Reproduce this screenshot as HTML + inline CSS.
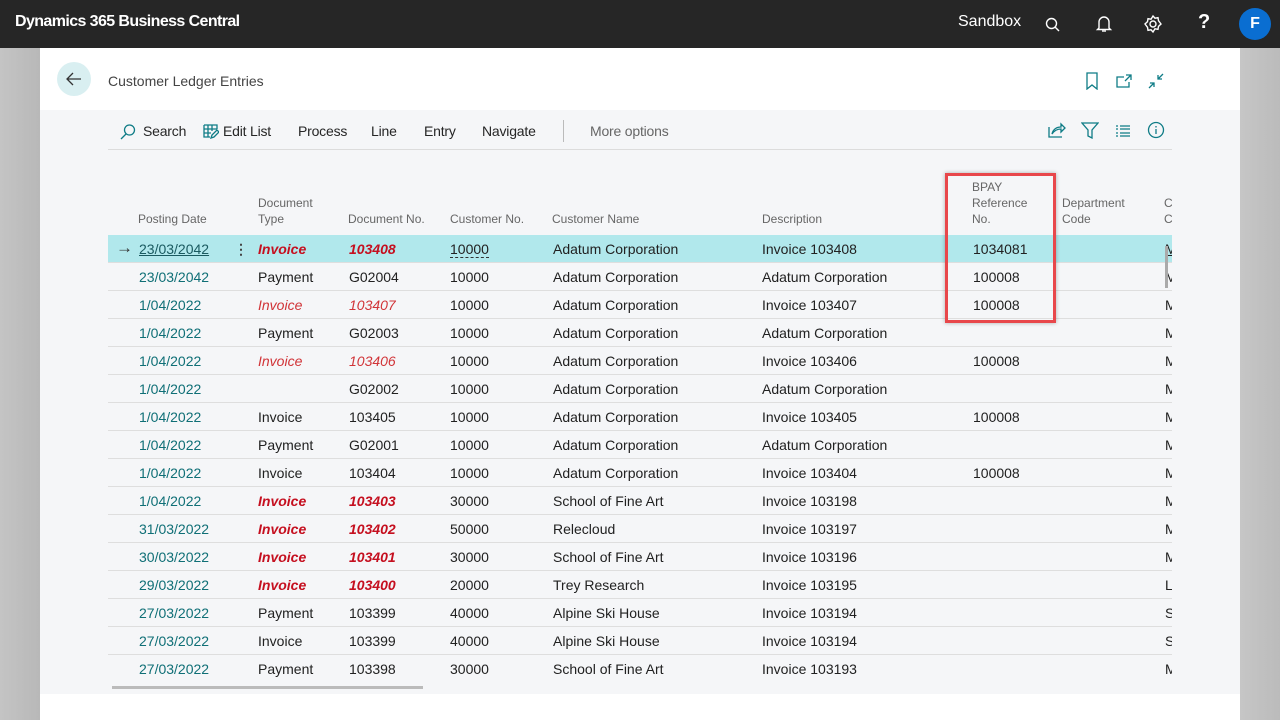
<!DOCTYPE html>
<html><head><meta charset="utf-8"><style>
*{margin:0;padding:0;box-sizing:border-box}
body{width:1280px;height:720px;overflow:hidden;font-family:"Liberation Sans",sans-serif;background:linear-gradient(90deg,#c4c4c4,#b8b8b8 40px,#fff 40px,#fff 1240px,#c6c6c6 1240px,#bbb);position:relative}
.top{position:absolute;left:0;top:0;width:1280px;height:48px;background:#262626;color:#fff}
.ab{position:absolute;white-space:nowrap}
.area{position:absolute;left:40px;top:110px;width:1200px;height:584px;background:#f5f6f8}
.bar{position:absolute;left:108px;top:149px;width:1064px;height:1px;background:#dcdcdc}
.tb{position:absolute;top:123px;font-size:14px;color:#262626;letter-spacing:-0.2px}
.h{position:absolute;font-size:12px;color:#666;line-height:16px}
.row{position:absolute;left:108px;width:1064px;height:28px;border-bottom:1px solid #dedede;font-size:14px;color:#212121;overflow:hidden}
.row span{position:absolute;top:6px;white-space:nowrap}
.d{color:#0f6f76}
.bi{color:#c50f1f;font-weight:bold;font-style:italic}
.it{color:#d13438;font-style:italic}
</style></head><body>
<div class="top">
<div class="ab" style="left:15px;top:13px;font-size:16px;font-weight:bold;letter-spacing:-0.6px">Dynamics 365 Business Central</div>
<div class="ab" style="left:958px;top:13px;font-size:16px">Sandbox</div>
<svg class="ab" style="left:1044px;top:16px" width="18" height="18" viewBox="0 0 18 18" fill="none" stroke="#fff" stroke-width="1.4"><circle cx="7.5" cy="7.5" r="5"/><path d="M11 11l4 4"/></svg>
<svg class="ab" style="left:1095px;top:14px" width="18" height="20" viewBox="0 0 18 20" fill="none" stroke="#fff" stroke-width="1.4"><path d="M4 14V8a5 5 0 0110 0v6l1.5 1.5h-13z"/><path d="M7 17h4"/></svg>
<svg class="ab" style="left:1143px;top:14px" width="20" height="20" viewBox="0 0 20 20" fill="none" stroke="#fff" stroke-width="1.4"><circle cx="10" cy="10" r="3"/><path d="M10 2l2 2.2 3-.5.5 3L18 10l-2.5 2.3-.5 3-3-.5L10 18l-2-2.2-3 .5-.5-3L2 10l2.5-2.3.5-3 3 .5z"/></svg>
<div class="ab" style="left:1198px;top:11px;font-size:20px;font-weight:bold">?</div>
<div class="ab" style="left:1239px;top:8px;width:32px;height:32px;border-radius:50%;background:#0a6ed1;text-align:center;line-height:32px;font-weight:bold;font-size:16px">F</div>
</div>
<div class="ab" style="left:57px;top:62px;width:34px;height:34px;border-radius:50%;background:#d9eff1"></div>
<svg class="ab" style="left:64px;top:69px" width="20" height="20" viewBox="0 0 20 20" fill="none" stroke="#333" stroke-width="1.3"><path d="M17 10H3M9 4l-6 6 6 6"/></svg>
<div class="ab" style="left:108px;top:73px;font-size:14px;color:#444">Customer Ledger Entries</div>
<svg class="ab" style="left:1085px;top:72px" width="14" height="18" viewBox="0 0 14 18" fill="none" stroke="#0f7c86" stroke-width="1.3"><path d="M2 1h10v16l-5-4-5 4z"/></svg>
<svg class="ab" style="left:1115px;top:73px" width="18" height="16" viewBox="0 0 18 16" fill="none" stroke="#0f7c86" stroke-width="1.3"><path d="M9 4H2v10h12V9M11 2h5v5M16 2l-6 6"/></svg>
<svg class="ab" style="left:1147px;top:72px" width="18" height="18" viewBox="0 0 18 18" fill="none" stroke="#0f7c86" stroke-width="1.3"><path d="M16 2l-5 5M11 3v4h4M2 16l5-5M3 11h4v4"/></svg>
<div class="area"></div>
<svg class="ab" style="left:119px;top:123px" width="18" height="18" viewBox="0 0 18 18" fill="none" stroke="#0f7c86" stroke-width="1.3"><circle cx="10.5" cy="7" r="5"/><path d="M7 11l-5 5"/></svg>
<div class="tb" style="left:143px">Search</div>
<svg class="ab" style="left:203px;top:124px" width="16" height="15" viewBox="0 0 16 15" fill="none" stroke="#0f7c86" stroke-width="1.3"><path d="M1 1h13v4M1 1v12h6M1 5h13M1 9h7M5 1v12M9 1v6M8 14l1-3 5-5 2 2-5 5z"/></svg>
<div class="tb" style="left:223px">Edit List</div>
<div class="tb" style="left:298px">Process</div>
<div class="tb" style="left:371px">Line</div>
<div class="tb" style="left:424px">Entry</div>
<div class="tb" style="left:482px">Navigate</div>
<div class="ab" style="left:563px;top:120px;width:1px;height:22px;background:#bbb"></div>
<div class="tb" style="left:590px;color:#666">More options</div>
<svg class="ab" style="left:1048px;top:122px" width="18" height="16" viewBox="0 0 18 16" fill="none" stroke="#0f7c86" stroke-width="1.3"><path d="M1 5v10h13M4 12c1-5 5-7 9-7V2l4 4-4 4V7c-4 0-7 2-9 5z"/></svg>
<svg class="ab" style="left:1081px;top:122px" width="18" height="17" viewBox="0 0 18 17" fill="none" stroke="#0f7c86" stroke-width="1.3"><path d="M1 1h16l-6 7v8l-4-2V8z"/></svg>
<svg class="ab" style="left:1115px;top:124px" width="16" height="14" viewBox="0 0 16 14" fill="none" stroke="#0f7c86" stroke-width="1.3"><path d="M1 2h2M5 2h10M1 5h2M5 5h10M1 9h2M5 9h10M1 12h2M5 12h10"/></svg>
<svg class="ab" style="left:1147px;top:121px" width="18" height="18" viewBox="0 0 18 18" fill="none" stroke="#0f7c86" stroke-width="1.3"><circle cx="9" cy="9" r="7.5"/><path d="M9 8v5M9 5v1.5"/></svg>
<div class="bar"></div>
<div class="h" style="left:138px;top:211px">Posting Date</div>
<div class="h" style="left:258px;top:195px">Document<br>Type</div>
<div class="h" style="left:348px;top:211px">Document No.</div>
<div class="h" style="left:450px;top:211px">Customer No.</div>
<div class="h" style="left:552px;top:211px">Customer Name</div>
<div class="h" style="left:762px;top:211px">Description</div>
<div class="h" style="left:972px;top:179px">BPAY<br>Reference<br>No.</div>
<div class="h" style="left:1062px;top:195px">Department<br>Code</div>
<div class="h" style="left:1164px;top:195px;width:8px;overflow:hidden">C<br>C</div>
<div class="row" style="top:235px;background:#b1e8ec"><span style="left:8px;top:3px;color:#333;font-size:17px">→</span><span class="d" style="left:31px;text-decoration:underline;color:#1a5a60">23/03/2042</span><span style="left:126px;font-weight:bold;color:#444">⋮</span><span class="bi" style="left:150px">Invoice</span><span class="bi" style="left:241px">103408</span><span style="left:342px;border-bottom:1px dashed #333">10000</span><span style="left:445px">Adatum Corporation</span><span style="left:654px">Invoice 103408</span><span style="left:865px">1034081</span><span style="left:1057px;text-decoration:underline">M</span></div>
<div class="row" style="top:263px"><span class="d" style="left:31px">23/03/2042</span><span style="left:150px">Payment</span><span style="left:241px">G02004</span><span style="left:342px">10000</span><span style="left:445px">Adatum Corporation</span><span style="left:654px">Adatum Corporation</span><span style="left:865px">100008</span><span style="left:1057px">M</span></div>
<div class="row" style="top:291px"><span class="d" style="left:31px">1/04/2022</span><span class="it" style="left:150px">Invoice</span><span class="it" style="left:241px">103407</span><span style="left:342px">10000</span><span style="left:445px">Adatum Corporation</span><span style="left:654px">Invoice 103407</span><span style="left:865px">100008</span><span style="left:1057px">M</span></div>
<div class="row" style="top:319px"><span class="d" style="left:31px">1/04/2022</span><span style="left:150px">Payment</span><span style="left:241px">G02003</span><span style="left:342px">10000</span><span style="left:445px">Adatum Corporation</span><span style="left:654px">Adatum Corporation</span><span style="left:1057px">M</span></div>
<div class="row" style="top:347px"><span class="d" style="left:31px">1/04/2022</span><span class="it" style="left:150px">Invoice</span><span class="it" style="left:241px">103406</span><span style="left:342px">10000</span><span style="left:445px">Adatum Corporation</span><span style="left:654px">Invoice 103406</span><span style="left:865px">100008</span><span style="left:1057px">M</span></div>
<div class="row" style="top:375px"><span class="d" style="left:31px">1/04/2022</span><span style="left:241px">G02002</span><span style="left:342px">10000</span><span style="left:445px">Adatum Corporation</span><span style="left:654px">Adatum Corporation</span><span style="left:1057px">M</span></div>
<div class="row" style="top:403px"><span class="d" style="left:31px">1/04/2022</span><span style="left:150px">Invoice</span><span style="left:241px">103405</span><span style="left:342px">10000</span><span style="left:445px">Adatum Corporation</span><span style="left:654px">Invoice 103405</span><span style="left:865px">100008</span><span style="left:1057px">M</span></div>
<div class="row" style="top:431px"><span class="d" style="left:31px">1/04/2022</span><span style="left:150px">Payment</span><span style="left:241px">G02001</span><span style="left:342px">10000</span><span style="left:445px">Adatum Corporation</span><span style="left:654px">Adatum Corporation</span><span style="left:1057px">M</span></div>
<div class="row" style="top:459px"><span class="d" style="left:31px">1/04/2022</span><span style="left:150px">Invoice</span><span style="left:241px">103404</span><span style="left:342px">10000</span><span style="left:445px">Adatum Corporation</span><span style="left:654px">Invoice 103404</span><span style="left:865px">100008</span><span style="left:1057px">M</span></div>
<div class="row" style="top:487px"><span class="d" style="left:31px">1/04/2022</span><span class="bi" style="left:150px">Invoice</span><span class="bi" style="left:241px">103403</span><span style="left:342px">30000</span><span style="left:445px">School of Fine Art</span><span style="left:654px">Invoice 103198</span><span style="left:1057px">M</span></div>
<div class="row" style="top:515px"><span class="d" style="left:31px">31/03/2022</span><span class="bi" style="left:150px">Invoice</span><span class="bi" style="left:241px">103402</span><span style="left:342px">50000</span><span style="left:445px">Relecloud</span><span style="left:654px">Invoice 103197</span><span style="left:1057px">M</span></div>
<div class="row" style="top:543px"><span class="d" style="left:31px">30/03/2022</span><span class="bi" style="left:150px">Invoice</span><span class="bi" style="left:241px">103401</span><span style="left:342px">30000</span><span style="left:445px">School of Fine Art</span><span style="left:654px">Invoice 103196</span><span style="left:1057px">M</span></div>
<div class="row" style="top:571px"><span class="d" style="left:31px">29/03/2022</span><span class="bi" style="left:150px">Invoice</span><span class="bi" style="left:241px">103400</span><span style="left:342px">20000</span><span style="left:445px">Trey Research</span><span style="left:654px">Invoice 103195</span><span style="left:1057px">L</span></div>
<div class="row" style="top:599px"><span class="d" style="left:31px">27/03/2022</span><span style="left:150px">Payment</span><span style="left:241px">103399</span><span style="left:342px">40000</span><span style="left:445px">Alpine Ski House</span><span style="left:654px">Invoice 103194</span><span style="left:1057px">S</span></div>
<div class="row" style="top:627px"><span class="d" style="left:31px">27/03/2022</span><span style="left:150px">Invoice</span><span style="left:241px">103399</span><span style="left:342px">40000</span><span style="left:445px">Alpine Ski House</span><span style="left:654px">Invoice 103194</span><span style="left:1057px">S</span></div>
<div class="row" style="top:655px;border-bottom:none"><span class="d" style="left:31px">27/03/2022</span><span style="left:150px">Payment</span><span style="left:241px">103398</span><span style="left:342px">30000</span><span style="left:445px">School of Fine Art</span><span style="left:654px">Invoice 103193</span><span style="left:1057px">M</span></div>
<div class="ab" style="left:1165px;top:246px;width:3px;height:42px;background:#aaa"></div>
<div class="ab" style="left:112px;top:686px;width:311px;height:3px;background:#bbb"></div>
<div class="ab" style="left:945px;top:173px;width:111px;height:150px;border:3px solid #e8474b;box-shadow:0 0 4px rgba(0,0,0,.3)"></div>
</body></html>
